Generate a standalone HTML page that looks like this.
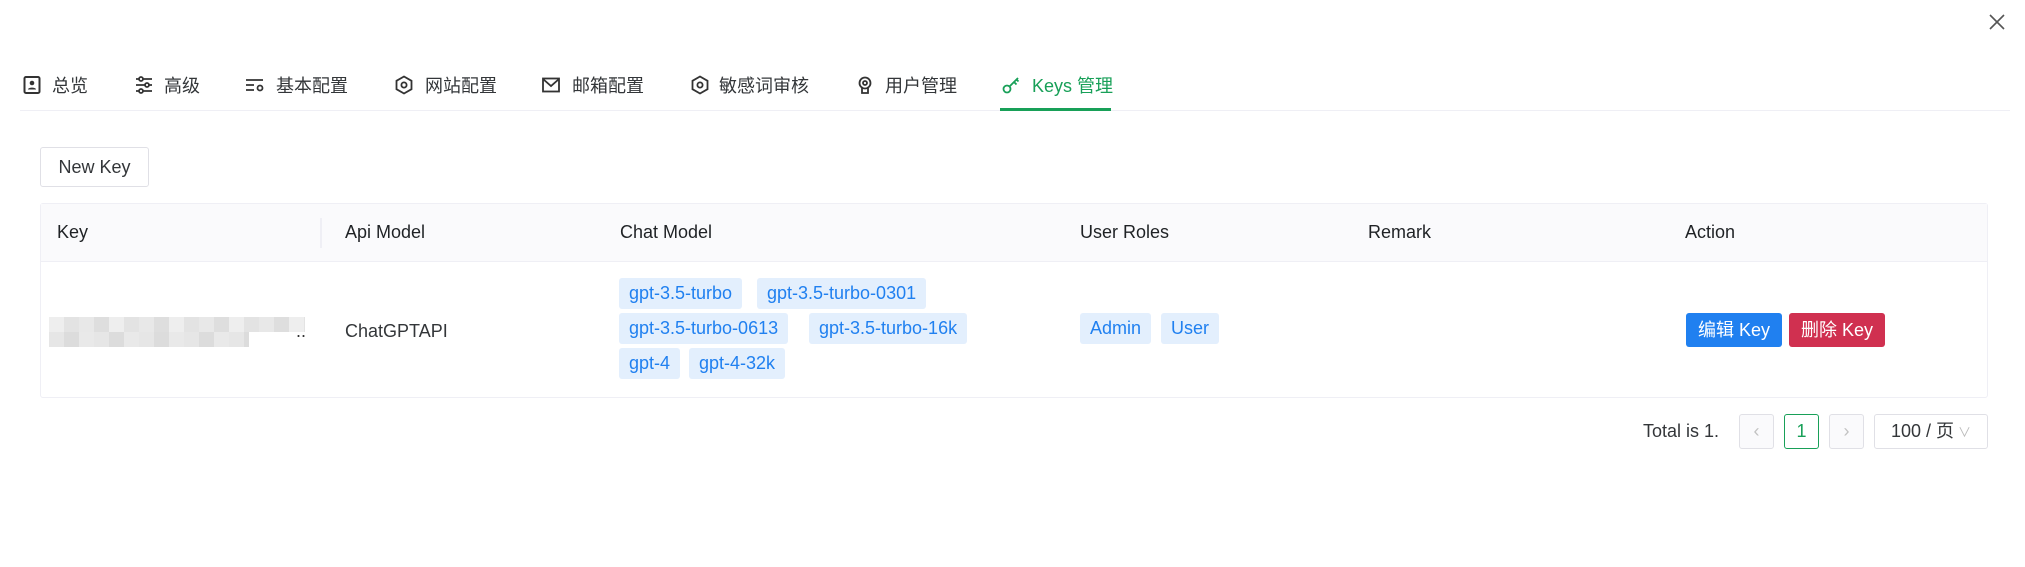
<!DOCTYPE html>
<html><head><meta charset="utf-8"><style>
*{box-sizing:border-box;margin:0;padding:0}
body{width:2025px;height:567px;background:#fff;position:relative;overflow:hidden;font-family:"Liberation Sans","Noto Sans CJK SC",sans-serif;font-size:18px;color:#1f2225}
.a{position:absolute}
.tab{position:absolute;top:73px;height:26px;line-height:26px;color:#333639;font-size:18px;white-space:nowrap}
.ic{position:absolute;top:75px;width:20px;height:20px}
.tag{position:absolute;height:31px;line-height:31px;background:#e3effd;color:#2080f0;padding:0 10px;border-radius:3px;font-size:18px;white-space:nowrap}
.th{position:absolute;top:222px;font-size:18px;color:#1f2225}
.pb{position:absolute;top:414px;height:35px;width:35px;border:1px solid #e0e0e6;border-radius:3px;background:#fafafc;text-align:center;line-height:33px;color:#c2c2c2}
</style></head><body>
<svg class="a" style="left:1988px;top:13px" width="18" height="18" viewBox="0 0 18 18"><path d="M2 2L16 16M16 2L2 16" stroke="#555" stroke-width="1.6"/></svg>

<svg class="ic" style="left:22px" viewBox="0 0 20 20"><rect x="2.5" y="2" width="15" height="16" rx="1.5" fill="none" stroke="#333" stroke-width="2"/><circle cx="10" cy="8" r="2.3" fill="#333"/><path d="M6 14.5c0-2.5 8-2.5 8 0" fill="#333"/></svg>
<div class="tab" style="left:52px">总览</div>
<svg class="ic" style="left:134px" viewBox="0 0 20 20" fill="none" stroke="#333" stroke-width="1.8"><path d="M2 4h16M2 10h16M2 16h16"/><circle cx="7" cy="4" r="2" fill="#fff"/><circle cx="13" cy="10" r="2" fill="#fff"/><circle cx="7" cy="16" r="2" fill="#fff"/></svg>
<div class="tab" style="left:164px">高级</div>
<svg class="ic" style="left:245px" viewBox="0 0 20 20" fill="none" stroke="#333" stroke-width="1.8"><path d="M1 5h17M1 10h8M1 15h8"/><circle cx="15" cy="13" r="2.5"/></svg>
<div class="tab" style="left:276px">基本配置</div>
<svg class="ic" style="left:394px" viewBox="0 0 20 20" fill="none" stroke="#333" stroke-width="1.8"><path d="M10 1.5l7.5 4.3v8.4L10 18.5l-7.5-4.3V5.8z"/><circle cx="10" cy="10" r="2.6"/></svg>
<div class="tab" style="left:425px">网站配置</div>
<svg class="ic" style="left:541px" viewBox="0 0 20 20" fill="none" stroke="#333" stroke-width="1.8"><rect x="2" y="3.5" width="16" height="13"/><path d="M2 4l8 7 8-7"/></svg>
<div class="tab" style="left:572px">邮箱配置</div>
<svg class="ic" style="left:690px" viewBox="0 0 20 20" fill="none" stroke="#333" stroke-width="1.8"><path d="M10 1.5l7.5 4.3v8.4L10 18.5l-7.5-4.3V5.8z"/><circle cx="10" cy="10" r="2.6"/></svg>
<div class="tab" style="left:719px">敏感词审核</div>
<svg class="ic" style="left:855px" viewBox="0 0 20 20" fill="none" stroke="#333" stroke-width="1.8"><circle cx="10" cy="8" r="5.5"/><circle cx="10" cy="8" r="2"/><path d="M7 13v5h6v-5"/></svg>
<div class="tab" style="left:885px">用户管理</div>
<svg class="ic" style="left:1001px" viewBox="0 0 20 20" fill="none" stroke="#18a058" stroke-width="1.8"><circle cx="6" cy="14" r="3.5"/><path d="M8.5 11.5L17 3M13 7l2.5 2.5M15.5 4.5l2 2"/></svg>
<div class="tab" style="left:1032px;color:#18a058">Keys 管理</div>
<div class="a" style="left:20px;top:110px;width:1990px;height:1px;background:#efeff5"></div>
<div class="a" style="left:1000px;top:108px;width:111px;height:3px;background:#18a058"></div>

<div class="a" style="left:40px;top:147px;width:109px;height:40px;border:1px solid #e0e0e6;border-radius:3px;text-align:center;line-height:38px;color:#333639">New Key</div>

<div class="a" style="left:40px;top:203px;width:1948px;height:195px;border:1px solid #efeff5;border-radius:3px"></div>
<div class="a" style="left:41px;top:204px;width:1946px;height:58px;background:#fafafc;border-bottom:1px solid #efeff5"></div>
<div class="a" style="left:320px;top:218px;width:2px;height:30px;background:#efeff5"></div>
<div class="th" style="left:57px">Key</div>
<div class="th" style="left:345px">Api Model</div>
<div class="th" style="left:620px">Chat Model</div>
<div class="th" style="left:1080px">User Roles</div>
<div class="th" style="left:1368px">Remark</div>
<div class="th" style="left:1685px">Action</div>

<div class="a" style="left:49px;top:317px;width:256px;height:15px;background:repeating-linear-gradient(90deg,#eee 0 15px,#e3e3e3 15px 30px,#e8e8e8 30px 45px,#dedede 45px 60px)"></div>
<div class="a" style="left:49px;top:332px;width:200px;height:15px;background:repeating-linear-gradient(90deg,#e6e6e6 0 15px,#dcdcdc 15px 30px,#e9e9e9 30px 45px)"></div>
<div class="a" style="left:296px;top:321px;font-size:18px;color:#333">..</div>
<div class="a" style="left:345px;top:321px;color:#333639">ChatGPTAPI</div>

<div class="tag" style="left:619px;top:278px">gpt-3.5-turbo</div>
<div class="tag" style="left:757px;top:278px">gpt-3.5-turbo-0301</div>
<div class="tag" style="left:619px;top:313px">gpt-3.5-turbo-0613</div>
<div class="tag" style="left:809px;top:313px">gpt-3.5-turbo-16k</div>
<div class="tag" style="left:619px;top:348px">gpt-4</div>
<div class="tag" style="left:689px;top:348px">gpt-4-32k</div>

<div class="tag" style="left:1080px;top:313px">Admin</div>
<div class="tag" style="left:1161px;top:313px">User</div>

<div class="a" style="left:1686px;top:313px;width:96px;height:34px;background:#2080f0;color:#fff;border-radius:3px;text-align:center;line-height:34px">编辑 Key</div>
<div class="a" style="left:1789px;top:313px;width:96px;height:34px;background:#d03050;color:#fff;border-radius:3px;text-align:center;line-height:34px">删除 Key</div>

<div class="a" style="left:1643px;top:421px;color:#333639">Total is 1.</div>
<div class="pb" style="left:1739px">‹</div>
<div class="pb" style="left:1784px;background:#fff;border-color:#18a058;color:#18a058">1</div>
<div class="pb" style="left:1829px">›</div>
<div class="a" style="left:1874px;top:414px;width:114px;height:35px;border:1px solid #e0e0e6;border-radius:3px;line-height:33px;padding-left:16px;color:#333639">100 / 页<span style="color:#bbb;font-size:13px;margin-left:4px">∨</span></div>
</body></html>
